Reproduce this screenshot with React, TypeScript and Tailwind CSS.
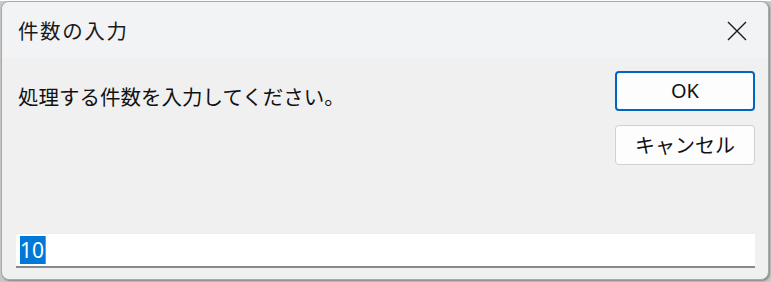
export default function App() {
  const font = { fontFamily: '"Noto Sans CJK JP", "Noto Sans", sans-serif' };
  return (
    <div className="h-[282px] w-[771px] bg-[#c8c8c8]" style={font}>
      <div className="ml-px mt-px flex h-[279px] w-[768px] flex-col overflow-hidden rounded-[8px] border border-[#a8a8a8] bg-[#f0f0f0] shadow-[1px_1px_2px_rgba(0,0,0,0.35)]">
        {/* title bar */}
        <div className="flex h-[56px] shrink-0 items-center justify-between bg-[#f2f3f5] pl-[16px] pr-[21px]">
          <span className="text-[20.5px] leading-none tracking-[1.6px] text-[#1a1a1a]">件数の入力</span>
          <svg width="20" height="20" viewBox="0 0 20 20" className="mt-[1px]">
            <path d="M1 1 L19 19 M19 1 L1 19" stroke="#1a1a1a" strokeWidth="1.4" fill="none" />
          </svg>
        </div>

        {/* body */}
        <div className="flex flex-1 flex-col pl-[14px] pr-[13px]">
          <div className="flex justify-between">
            <p className="pl-[2px] pt-[28px] text-[20.5px] leading-none text-[#111]">処理する件数を入力してください。</p>
            <div className="mt-[13px] flex flex-col gap-[14px]">
              <button className="h-[40px] w-[140px] rounded-[4px] border-2 border-[#0067c0] bg-[#fdfdfd] text-[20px] text-[#111]" style={{ fontFamily: '"Noto Sans", sans-serif' }}>
                OK
              </button>
              <button className="h-[40px] w-[140px] rounded-[4px] border border-[#d0d0d0] bg-[#fdfdfd] text-[20px] text-[#111]">
                キャンセル
              </button>
            </div>
          </div>

          <div className="mt-[68px] flex h-[35px] w-[739px] items-center border-t border-b-2 border-t-[#ececec] border-b-[#8a8a8a] bg-white pl-[4px]">
            <span
              className="flex h-[28px] items-center bg-[#0078d7] pr-px text-[21px] leading-none text-white"
              style={{ fontFamily: '"Noto Sans", sans-serif' }}
            >
              10
            </span>
            <span className="h-[28px] w-px bg-[#e87a1e]" />
          </div>
        </div>
      </div>
    </div>
  );
}
